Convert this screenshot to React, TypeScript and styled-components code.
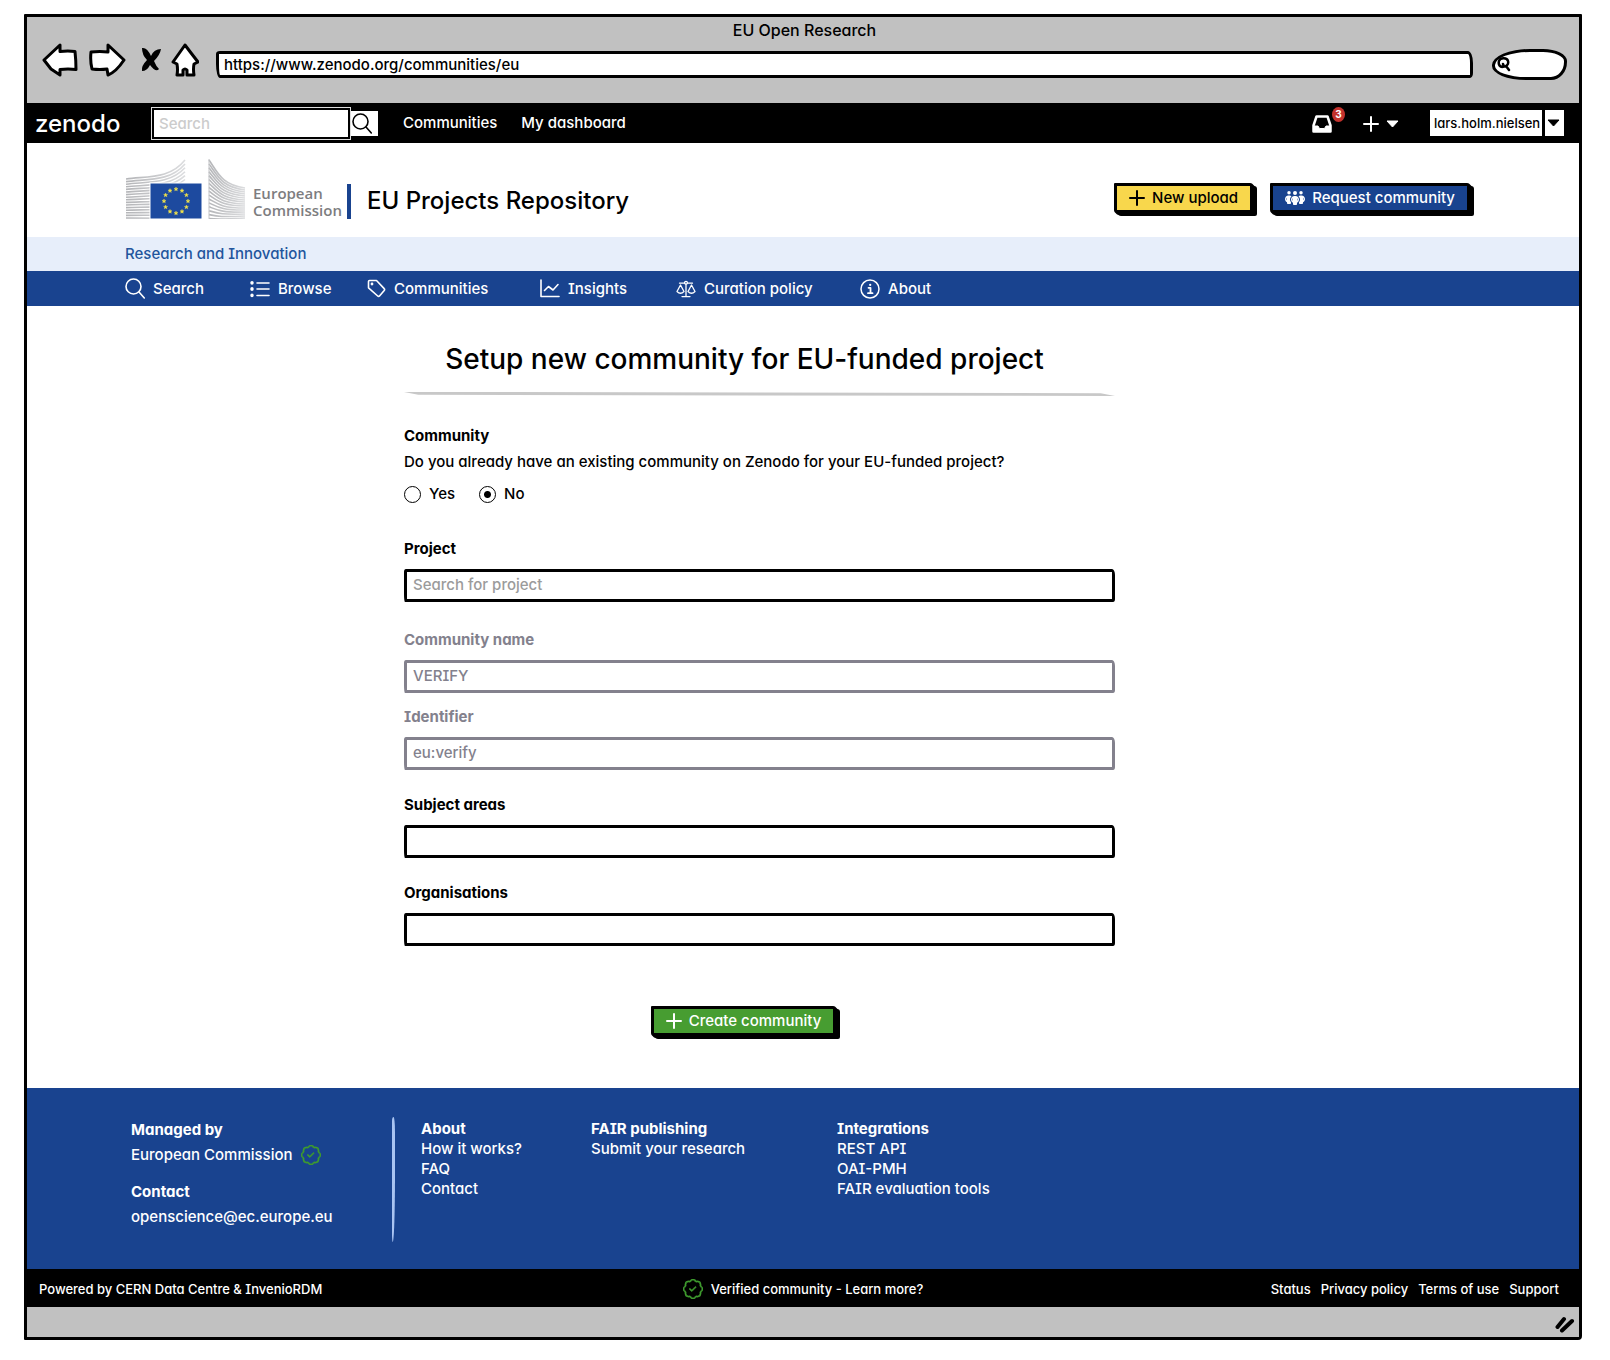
import React from "react";
import styled, { createGlobalStyle } from "styled-components";
import { BsPatchCheck } from "react-icons/bs";
import { FaPeopleGroup } from "react-icons/fa6";

const blue = "#19438f";
const grey = "#c1c1c1";
const muted = "#83818d";

const GlobalStyle = createGlobalStyle`
  *, *::before, *::after { box-sizing: border-box; }
  body {
    margin: 0;
    background: #fff;
    color: #000;
    font: 500 15px/24px Inter, "Liberation Sans", sans-serif;
    font-feature-settings: "cv11", "cv08", "ss03";
  }
  button, input, select { font: inherit; font-feature-settings: inherit; color: inherit; }
  a { color: inherit; text-decoration: none; }
  h1, h2, h3, p, ul { margin: 0; padding: 0; font: inherit; list-style: none; }
  svg { display: block; flex: none; }
`;

const Window = styled.div`
  margin: 14px 28px 18px 24px;
  border: 3px solid #000;
  border-radius: 1px 1px 4px 1px;
  background: #fff;
`;

/* Browser chrome */
const Chrome = styled.header`
  background: ${grey};
  height: 86px;
  padding: 1px 12px 0 15px;
`;
const WindowTitle = styled.p`
  font-size: 16px;
  text-align: center;
`;
const ChromeRow = styled.div`
  display: flex;
  align-items: center;
  height: 36px;
`;
const ChromeButton = styled.button<{ $w: number }>`
  width: ${(p) => p.$w}px;
  height: 36px;
  padding: 0;
  border: 0;
  background: none;
  display: grid;
  place-items: center;
`;
const Address = styled.input`
  flex: 1;
  min-width: 0;
  height: 27px;
  margin: 9px 19px 0 12px;
  padding: 0 5px;
  border: 3px solid #000;
  border-radius: 4px 5px 3px 4px / 3px 12px 5px 14px;
  background: #fff;
  outline: none;
`;
const ChromeSearch = styled.label`
  display: flex;
  align-items: center;
  width: 75px;
  height: 31px;
  margin-top: 8px;
  padding-left: 2px;
  border: 3px solid #000;
  border-radius: 38px 24px 16px 34px / 16px 12px 18px 14px;
  background: #fff;
  input { width: 40px; border: 0; background: none; outline: none; }
`;

/* Zenodo bar */
const TopBar = styled.nav`
  display: flex;
  align-items: center;
  height: 40px;
  padding: 0 15px 0 8px;
  background: #000;
  color: #fff;
`;
const Brand = styled.a`
  width: 116px;
  padding-top: 2px;
  font-size: 24px;
`;
const TopSearch = styled.form`
  display: flex;
  align-items: center;
  margin-right: 25px;
`;
const TopSearchInput = styled.input`
  width: 200px;
  height: 33px;
  padding: 0 5px;
  border: 3px solid #000;
  outline: 1px solid #ddd;
  outline-offset: -1px;
  border-radius: 0;
  background: #fff;
  color: #000;
  &::placeholder { color: #ccc; opacity: 1; }
`;
const TopSearchButton = styled.button`
  width: 27px;
  height: 25px;
  padding: 0 0 0 1px;
  border: 0;
  background: #fff;
  color: #000;
`;
const TopLinks = styled.div`
  display: flex;
  gap: 24px;
  flex: 1;
`;
const IconButton = styled.button`
  position: relative;
  display: flex;
  align-items: center;
  gap: 7px;
  padding: 2px 0 0;
  border: 0;
  background: none;
`;
const CreateButton = styled(IconButton)`
  margin-left: 31px;
`;
const Badge = styled.span`
  position: absolute;
  left: 20px;
  top: -6px;
  width: 13px;
  height: 15px;
  border-radius: 50%;
  background: #c4322d;
  font-size: 10px;
  font-weight: 700;
  line-height: 15px;
  text-align: center;
`;
const UserMenu = styled.div`
  position: relative;
  margin-left: 31px;
  svg { position: absolute; right: 4px; top: 9px; pointer-events: none; }
`;
const UserSelect = styled.select`
  appearance: none;
  display: block;
  width: 134px;
  height: 26px;
  padding: 0 0 1px 4px;
  border: 0;
  border-radius: 0;
  color: #000;
  font-size: 13px;
  background: linear-gradient(to right, #fff 112px, #000 112px, #000 115px, #fff 115px);
`;

/* Community header */
const Hero = styled.div`
  display: flex;
  align-items: center;
  height: 94px;
  padding: 0 105px 0 99px;
`;
const Logo = styled.a`
  display: flex;
  align-items: flex-end;
  height: 62px;
  margin-bottom: 5px;
  padding-right: 8px;
`;
const LogoName = styled.span`
  width: 94px;
  margin-left: 7px;
  color: #7d7d80;
  font: 600 15px/17px "Open Sans", "Noto Sans", sans-serif;
`;
const LogoBar = styled.span`
  width: 4px;
  height: 35px;
  background: ${blue};
`;
const RepoTitle = styled.h2`
  flex: 1;
  padding: 22px 0 0 8px;
  font-size: 24px;
  line-height: 32px;
`;
const HeroActions = styled.div`
  display: flex;
  gap: 13px;
  padding-top: 16px;
`;
const SketchButton = styled.button<{ $bg: string; $fg: string }>`
  display: flex;
  align-items: center;
  gap: 7px;
  height: 30px;
  margin-right: 4px;
  padding: 0 12px;
  border: 3px solid #000;
  border-radius: 1px 3px 2px 3px;
  box-shadow: 1px 1px 0 #000, 2px 2px 0 #000, 4px 3px 0 #000;
  background: ${(p) => p.$bg};
  color: ${(p) => p.$fg};
  white-space: nowrap;
`;
const Strip = styled.div`
  height: 34px;
  padding: 5px 98px;
  background: #e7eefa;
  color: #22559d;
`;
const MenuBar = styled.nav`
  display: flex;
  align-items: center;
  height: 35px;
  padding: 0 98px;
  background: ${blue};
  color: #fff;
`;
const MenuLink = styled.a<{ $w: number }>`
  display: flex;
  align-items: center;
  gap: 8px;
  width: ${(p) => p.$w}px;
  white-space: nowrap;
`;

/* Form */
const Main = styled.main`
  padding: 33px 464px 50px 377px;
`;
const Heading = styled.h1`
  padding-right: 30px;
  font-size: 28px;
  line-height: 40px;
  text-align: center;
  white-space: nowrap;
`;
const Rule = styled.hr`
  height: 4px;
  margin: 13px 0 28px;
  border: 0;
  background: #c8c8c8;
  clip-path: polygon(0 0, 50% 10%, 98% 30%, 100% 100%, 50% 85%, 2% 70%);
`;
const Choice = styled.fieldset`
  min-width: 0;
  margin: 0 0 31px;
  padding: 0;
  border: 0;
  legend { padding: 0; font-weight: 700; }
  p { margin-top: 2px; white-space: nowrap; }
`;
const Options = styled.div`
  display: flex;
  gap: 24px;
  margin-top: 8px;
`;
const Option = styled.label`
  display: flex;
  align-items: center;
  gap: 8px;
  input {
    appearance: none;
    width: 17px;
    height: 17px;
    margin: 0;
    border: 1px solid #000;
    border-radius: 50%;
  }
  input:checked { background: radial-gradient(circle, #000 3px, transparent 4px); }
`;
const Field = styled.div<{ $muted?: boolean; $after: number }>`
  display: flex;
  flex-direction: column;
  gap: 8px;
  margin-bottom: ${(p) => p.$after}px;
  color: ${(p) => (p.$muted ? muted : "#000")};
  label { font-weight: 700; }
  input {
    width: 100%;
    height: 33px;
    padding: 0 6px 2px;
    border: 3px solid currentColor;
    border-radius: 2px 3px 2px 1px / 3px 6px 3px 8px;
    background: #fff;
    outline: none;
  }
  input::placeholder { color: #9b9b9b; opacity: 1; }
`;
const Submit = styled.div`
  display: flex;
  justify-content: center;
  padding: 32px 28px 2px 0;
`;

/* Footer */
const Footer = styled.footer`
  display: flex;
  align-items: flex-start;
  height: 181px;
  padding: 29px 104px 0;
  background: ${blue};
  color: #fff;
`;
const Managed = styled.div`
  width: 261px;
  padding-top: 1px;
  h3 { font-weight: 700; }
  p { display: flex; align-items: center; gap: 8px; margin-top: 1px; }
  p + h3 { margin-top: 13px; }
`;
const Divider = styled.span`
  width: 3px;
  height: 125px;
  margin-right: 26px;
  border-radius: 2px 2px 3px 1px / 6px 20px 90px 10px;
  background: #a9c4f2;
`;
const LinkColumn = styled.div<{ $w: number }>`
  width: ${(p) => p.$w}px;
  padding-top: 2px;
  line-height: 20px;
  h3 { font-weight: 700; }
`;
const Legal = styled.div`
  display: grid;
  grid-template-columns: 1fr auto 1fr;
  align-items: center;
  height: 38px;
  padding: 2px 20px 0 12px;
  background: #000;
  color: #fff;
  font-size: 13px;
`;
const Verified = styled.a`
  display: flex;
  align-items: center;
  gap: 8px;
  margin-left: 8px;
`;
const LegalLinks = styled.div`
  display: flex;
  justify-content: flex-end;
  gap: 10px;
`;
const StatusBar = styled.div`
  display: flex;
  align-items: flex-end;
  justify-content: flex-end;
  height: 30px;
  padding: 4px;
  background: ${grey};
`;

const Sketch = { fill: "#fff", stroke: "#000", strokeWidth: 3, strokeLinejoin: "round" as const };

const Glyph = styled.svg.attrs({ fill: "none", stroke: "currentColor", strokeLinecap: "round", strokeLinejoin: "round" })``;

const SearchGlyph = () => (
  <Glyph width="20" height="21" viewBox="0 0 20 21" strokeWidth="1.6">
    <circle cx="8.5" cy="8.5" r="7.5" />
    <path d="M14 14l5.3 6" />
  </Glyph>
);
const ListGlyph = () => (
  <Glyph width="20" height="18" viewBox="0 0 20 18" strokeWidth="1.6">
    <path d="M7 3h12M7 9h12M7 15.500h12" />
    <path d="M2 2.600v.4M2 8.800v.4M2 15.200v.4" strokeWidth="3.400" />
  </Glyph>
);
const TagGlyph = () => (
  <Glyph width="19" height="19" viewBox="0 0 19 19" strokeWidth="1.6">
    <path d="M2.500 1.500h7l7.700 8.100q.8.800 0 1.800l-4.700 5.600q-.9.900-1.800 0L1.500 8.800V2.500q0-1 1-1z" />
    <circle cx="5" cy="5" r=".6" fill="currentColor" />
  </Glyph>
);
const ChartGlyph = () => (
  <Glyph width="20" height="19" viewBox="0 0 20 19" strokeWidth="1.6">
    <path d="M1 1v16.500h18M4.500 11.500l4-4 4.500 3.500 5-5.500" />
  </Glyph>
);
const ScaleGlyph = () => (
  <Glyph width="20" height="18" viewBox="0 0 20 18" strokeWidth="1.300">
    <path d="M3.500 3.200h5M11.500 3.200h5M10 4.500v12M6 16.600h8" />
    <circle cx="10" cy="2.800" r="1.400" />
    <path d="M4.500 5L1 11.500q3.500 3.500 7 0zM15.500 5L12 11.500q3.500 3.500 7 0z" />
  </Glyph>
);
const InfoGlyph = () => (
  <Glyph width="20" height="20" viewBox="0 0 20 20" strokeWidth="1.500">
    <circle cx="10" cy="10" r="9" />
    <path d="M8.500 8.800H10.500V14M8 14.200h4.500" strokeWidth="1.800" />
    <path d="M10.200 5.800v.1" strokeWidth="2.200" />
  </Glyph>
);
const Plus = () => (
  <Glyph width="16" height="16" viewBox="0 0 16 16" strokeWidth="2">
    <path d="M8 1v14M1 8h14" />
  </Glyph>
);
const Caret = ({ color }: { color: string }) => (
  <svg width="13" height="8" viewBox="0 0 13 8" fill={color} stroke={color} strokeLinejoin="round">
    <path d="M1 1h11L6.500 7z" />
  </svg>
);
const VerifiedGlyph = () => <BsPatchCheck size={20} color="#3f9b2f" stroke="#3f9b2f" strokeWidth={0.4} />;

/* The European Commission building, its flag and the ring of stars */
const Building = () => {
  const rows = Array.from({ length: 16 }, (_, i) => i);
  return (
    <svg width="120" height="60" viewBox="0 0 120 60" fill="none">
      <defs>
        <linearGradient id="wall"><stop offset="0" stopColor="#b4b5b8" /><stop offset="1" stopColor="#dcdddf" /></linearGradient>
      </defs>
      <g stroke="url(#wall)" strokeWidth="1.600">
        {rows.map((i) => (
          <path key={i} d={`M0 ${20 + i * 2.6}C22 ${17 + i * 2.8} 44 ${20 + i * 2.6} 59 ${1 + i * 3.9}`} />
        ))}
        {rows.map((i) => (
          <path key={`r${i}`} d={`M83 ${1 + i * 3.9}C92 ${14 + i * 3.1} 96 ${26 + i * 2.300} 119 ${29 + i * 2}`} />
        ))}
      </g>
      <path d="M83 0v60" stroke="#c4c5c8" />
      <rect x="24" y="24" width="52" height="36" fill="#1d4a9f" stroke="#fff" />
      {Array.from({ length: 12 }, (_, i) => {
        const a = (i * Math.PI) / 6;
        return (
          <path
            key={i}
            transform={`translate(${50 + 12 * Math.sin(a)} ${42 - 12 * Math.cos(a)})`}
            d="M0-2L.6-.6 2-.6.9.4 1.3 1.8 0 1-1.3 1.8-.9.4-2-.6-.6-.6z"
            fill="#f3e34a"
            stroke="#f3e34a"
            strokeWidth=".4"
          />
        );
      })}
    </svg>
  );
};

const columns = [
  { title: "About", width: 170, links: ["How it works?", "FAQ", "Contact"] },
  { title: "FAIR publishing", width: 246, links: ["Submit your research"] },
  { title: "Integrations", width: 240, links: ["REST API", "OAI-PMH", "FAIR evaluation tools"] },
];

const menu = [
  { label: "Search", width: 125, icon: <SearchGlyph /> },
  { label: "Browse", width: 117, icon: <ListGlyph /> },
  { label: "Communities", width: 173, icon: <TagGlyph /> },
  { label: "Insights", width: 136, icon: <ChartGlyph /> },
  { label: "Curation policy", width: 184, icon: <ScaleGlyph /> },
  { label: "About", width: 90, icon: <InfoGlyph /> },
];

export default function App() {
  return (
    <>
      <GlobalStyle />
      <Window>
        <Chrome>
          <WindowTitle>EU Open Research</WindowTitle>
          <ChromeRow>
            <ChromeButton $w={36} aria-label="Back">
              <svg width="36" height="34" viewBox="0 0 36 34" {...Sketch}><path d="M2 17L18 2v6.500q8-1 15 0 1 9 1 18-8-1-16 0V32L9 26z" /></svg>
            </ChromeButton>
            <ChromeButton $w={58} aria-label="Forward">
              <svg width="38" height="34" viewBox="0 0 38 34" {...Sketch}><path d="M36 17L20 2v7q-8-1-17 0-1 9 1 17 8 1 15 0l1 6q8-3 16-15z" /></svg>
            </ChromeButton>
            <ChromeButton $w={30} aria-label="Stop">
              <svg width="20" height="26" viewBox="0 0 20 26" fill="#000"><path d="M1 1q5-1 9 8 3-7 10-7-1 6-7 12 2 5 5 8-3 4-9-4-3 6-8 6-1-5 5-11Q1 8 1 1z" /></svg>
            </ChromeButton>
            <ChromeButton $w={38} aria-label="Home">
              <svg width="28" height="34" viewBox="0 0 28 34" {...Sketch}><path d="M14 2L2 19l4 2q1 6 0 11h6v-5q2-2 4 0v5h7q-1-6 0-11l4-2Q20 10 14 2z" /></svg>
            </ChromeButton>
            <Address aria-label="Address" defaultValue="https://www.zenodo.org/communities/eu" />
            <ChromeSearch aria-label="Web search">
              <svg width="14" height="16" viewBox="0 0 14 16" fill="none" stroke="#000" strokeWidth="2.500" strokeLinecap="round"><path d="M7 10.500C3 12 1 8.500 2 5S10 1 11 5 9 10 7 10.500L6 8M9 10l3 4" /></svg>
              <input type="text" />
            </ChromeSearch>
          </ChromeRow>
        </Chrome>

        <TopBar>
          <Brand href="#">zenodo</Brand>
          <TopSearch>
            <TopSearchInput aria-label="Search records" placeholder="Search" />
            <TopSearchButton type="button" aria-label="Search"><SearchGlyph /></TopSearchButton>
          </TopSearch>
          <TopLinks>
            <a href="#">Communities</a>
            <a href="#">My dashboard</a>
          </TopLinks>
          <IconButton aria-label="Inbox">
            <svg width="20" height="18" viewBox="0 0 20 18" fill="none" stroke="#fff" strokeWidth="2.500" strokeLinejoin="round">
              <path d="M4.500 1.500h11l3 9v6h-17v-6z" />
              <path d="M2 11h4l1.500 2.500h5L14 11h4v5H2z" fill="#fff" strokeWidth="1" />
            </svg>
            <Badge>3</Badge>
          </IconButton>
          <CreateButton aria-label="Create"><Plus /><Caret color="#fff" /></CreateButton>
          <UserMenu>
            <UserSelect aria-label="Account"><option>lars.holm.nielsen</option></UserSelect>
            <Caret color="#000" />
          </UserMenu>
        </TopBar>

        <Hero>
          <Logo href="#" aria-label="European Commission">
            <Building />
            <LogoName>European Commission</LogoName>
            <LogoBar />
          </Logo>
          <RepoTitle>EU Projects Repository</RepoTitle>
          <HeroActions>
            <SketchButton $bg="#f8d74c" $fg="#000"><Plus />New upload</SketchButton>
            <SketchButton $bg={blue} $fg="#fff"><FaPeopleGroup size={20} />Request community</SketchButton>
          </HeroActions>
        </Hero>
        <Strip>Research and Innovation</Strip>
        <MenuBar>
          {menu.map((m) => (
            <MenuLink key={m.label} href="#" $w={m.width}>{m.icon}{m.label}</MenuLink>
          ))}
        </MenuBar>

        <Main>
          <Heading>Setup new community for EU-funded project</Heading>
          <Rule />
          <Choice>
            <legend>Community</legend>
            <p>Do you already have an existing community on Zenodo for your EU-funded project?</p>
            <Options>
              <Option><input type="radio" name="existing" />Yes</Option>
              <Option><input type="radio" name="existing" defaultChecked />No</Option>
            </Options>
          </Choice>
          <Field $after={26}>
            <label htmlFor="project">Project</label>
            <input id="project" placeholder="Search for project" />
          </Field>
          <Field $after={12} $muted>
            <label htmlFor="name">Community name</label>
            <input id="name" defaultValue="VERIFY" readOnly />
          </Field>
          <Field $after={23} $muted>
            <label htmlFor="identifier">Identifier</label>
            <input id="identifier" defaultValue="eu:verify" readOnly />
          </Field>
          <Field $after={23}>
            <label htmlFor="subjects">Subject areas</label>
            <input id="subjects" />
          </Field>
          <Field $after={28}>
            <label htmlFor="organisations">Organisations</label>
            <input id="organisations" />
          </Field>
          <Submit>
            <SketchButton $bg="#479d31" $fg="#fff"><Plus />Create community</SketchButton>
          </Submit>
        </Main>

        <Footer>
          <Managed>
            <h3>Managed by</h3>
            <p>European Commission <VerifiedGlyph /></p>
            <h3>Contact</h3>
            <p><a href="#">openscience@ec.europe.eu</a></p>
          </Managed>
          <Divider />
          {columns.map((c) => (
            <LinkColumn key={c.title} $w={c.width}>
              <h3>{c.title}</h3>
              <ul>{c.links.map((l) => <li key={l}><a href="#">{l}</a></li>)}</ul>
            </LinkColumn>
          ))}
        </Footer>
        <Legal>
          <span>Powered by CERN Data Centre &amp; InvenioRDM</span>
          <Verified href="#"><VerifiedGlyph />Verified community - Learn more?</Verified>
          <LegalLinks>
            <a href="#">Status</a>
            <a href="#">Privacy policy</a>
            <a href="#">Terms of use</a>
            <a href="#">Support</a>
          </LegalLinks>
        </Legal>
        <StatusBar>
          <svg width="20" height="17" viewBox="0 0 20 17" stroke="#000" strokeWidth="4" strokeLinecap="round"><path d="M2.500 11L9 3M7 14.500L17 5" /></svg>
        </StatusBar>
      </Window>
    </>
  );
}
